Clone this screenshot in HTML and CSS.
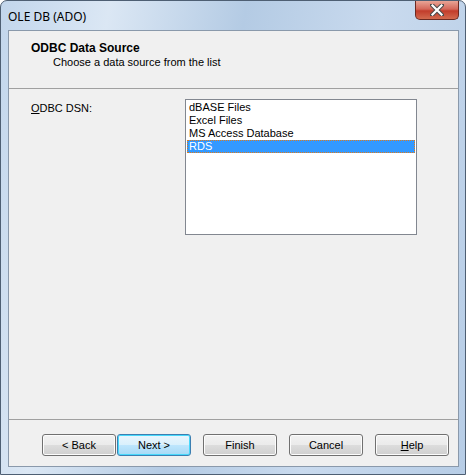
FILE: index.html
```html
<!DOCTYPE html>
<html lang="en">
<head>
  <meta charset="UTF-8">
  <title>OLE DB (ADO)</title>
  <link rel="stylesheet" href="styles.css">
</head>
<body>
  <div class="window">
    <div class="titlebar">
      <span class="title">OLE DB (ADO)</span>
      <div class="close">
        <svg width="14" height="12" viewBox="0 0 14 12">
          <path d="M2 1 L12 11 M12 1 L2 11" stroke="#4a4a4a" stroke-width="4.2" stroke-linecap="square"/>
          <path d="M2.5 1.5 L11.5 10.5 M11.5 1.5 L2.5 10.5" stroke="#fff" stroke-width="2.2" stroke-linecap="square"/>
        </svg>
      </div>
    </div>
    <div class="client">
      <div class="header">
        <div class="heading">ODBC Data Source</div>
        <div class="subheading">Choose a data source from the list</div>
      </div>
      <div class="content">
        <label class="field-label"><u>O</u>DBC DSN:</label>
        <div class="listbox">
          <div class="item">dBASE Files</div>
          <div class="item">Excel Files</div>
          <div class="item">MS Access Database</div>
          <div class="item selected">RDS</div>
        </div>
      </div>
      <div class="footer">
        <button class="btn">&lt; Back</button>
        <button class="btn default">Next &gt;</button>
        <button class="btn gap">Finish</button>
        <button class="btn gap">Cancel</button>
        <button class="btn gap"><u>H</u>elp</button>
      </div>
    </div>
  </div>
</body>
</html>
```

FILE: styles.css
```css
body {
  margin: 0;
  font-family: 'Liberation Sans', Arial, sans-serif;
  font-size: 11px;
  color: #000;
  background: #fff;
}

.window {
  width: 466px;
  height: 475px;
  box-sizing: border-box;
  border: 1px solid #4e5f73;
  border-radius: 7px 7px 0 0;
  background: linear-gradient(100deg, #c2d6ec 0%, #dbe7f4 20%, #b4cbe4 45%, #c9daee 70%, #b7cde6 100%);
  display: flex;
  flex-direction: column;
  overflow: hidden;
}

.titlebar {
  height: 29px;
  display: flex;
  align-items: flex-start;
  justify-content: space-between;
  padding-left: 7px;
}

.title {
  font-family: 'Noto Sans', sans-serif;
  font-size: 12px;
  margin-top: 7px;
  color: #000;
}

.close {
  width: 44px;
  height: 19px;
  margin-right: 6px;
  box-sizing: border-box;
  border: 1px solid #6b2a22;
  border-top: none;
  border-radius: 0 0 5px 5px;
  background: linear-gradient(#e8a596 0%, #d4685a 45%, #c23d2b 55%, #d26a4f 100%);
  display: flex;
  align-items: center;
  justify-content: center;
}

.client {
  margin: 0 6px 7px 7px;
  flex: 1;
  background: #f0f0f0;
  border: 1px solid #8a99ab;
  display: flex;
  flex-direction: column;
}

.header {
  height: 58px;
  box-sizing: border-box;
  padding: 10px 0 0 22px;
  border-bottom: 1px solid #a0a0a0;
}

.heading {
  font-weight: bold;
  font-size: 12px;
  line-height: 14px;
}

.subheading {
  margin: 1px 0 0 22px;
  line-height: 13px;
}

.content {
  flex: 1;
  display: flex;
  align-items: flex-start;
  padding: 10px 0 0 22px;
  border-bottom: 1px solid #a0a0a0;
}

.field-label {
  width: 154px;
  margin-top: 3px;
  line-height: 13px;
}

.listbox {
  width: 232px;
  height: 136px;
  box-sizing: border-box;
  border: 1px solid #828790;
  background: #fff;
  padding: 1px;
}

.item {
  height: 13px;
  line-height: 13px;
  padding-left: 2px;
}

.item.selected {
  box-sizing: border-box;
  background: #3399ff;
  color: #fff;
  border: 1px dotted #e07b1a;
  line-height: 11px;
  padding-left: 1px;
}

.footer {
  height: 46px;
  box-sizing: border-box;
  display: flex;
  align-items: flex-start;
  padding: 14px 0 0 33px;
}

.btn {
  width: 74px;
  height: 22px;
  font-family: 'Liberation Sans', Arial, sans-serif;
  font-size: 11px;
  border: 1px solid #707070;
  border-radius: 3px;
  background: linear-gradient(#f2f2f2 0%, #ebebeb 50%, #dddddd 50%, #cfcfcf 100%);
  box-shadow: inset 0 0 0 1px #fcfcfc;
  padding: 0;
  margin-right: 1px;
  color: #000;
}

.btn.default {
  border-color: #3c7fb1;
  box-shadow: inset 0 0 0 1px #48d8fb;
  background: linear-gradient(#eaf6fd 0%, #d9f0fc 50%, #bee6fd 50%, #a7d9f5 100%);
}

.btn.gap {
  margin-left: 11px;
}
```
